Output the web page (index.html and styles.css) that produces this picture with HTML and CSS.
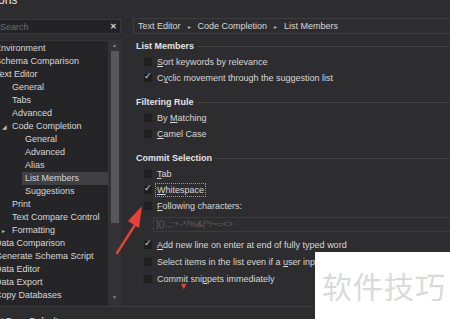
FILE: index.html
```html
<!doctype html>
<html lang="en">
	<head>
	<meta charset="utf-8">
	<title>Options</title>
	<link rel="stylesheet" href="styles.css">
	</head>
	<body>

		<div class="title">Options</div>

		<div class="main">
			<div class="side">
				<div class="search"><span class="ph">Search</span><span class="clear">&#x2715;</span></div>
				<div class="tree">
					<ul class="nodes">
						<li class="l0">Environment</li>
						<li class="l0">Schema Comparison</li>
						<li class="l0">Text Editor</li>
						<li class="l1">General</li>
						<li class="l1">Tabs</li>
						<li class="l1">Advanced</li>
						<li class="l1"><span class="exp">&#x25E2;</span>Code Completion</li>
						<li class="l2">General</li>
						<li class="l2">Advanced</li>
						<li class="l2">Alias</li>
						<li class="l2 selected">List Members</li>
						<li class="l2">Suggestions</li>
						<li class="l1">Print</li>
						<li class="l1">Text Compare Control</li>
						<li class="l1"><span class="exp">&#x25B8;</span>Formatting</li>
						<li class="l0">Data Comparison</li>
						<li class="l0">Generate Schema Script</li>
						<li class="l0">Data Editor</li>
						<li class="l0">Data Export</li>
						<li class="l0">Copy Databases</li>
					</ul>
					<div class="vscroll">
						<span class="arr">&#x25B2;</span>
						<div class="thumb"></div>
						<span class="arr down">&#x25BC;</span>
					</div>
				</div>
			</div>

			<div class="pane">
				<div class="crumbs">
					<span>Text Editor</span><span class="sep">&#x25B8;</span>
					<span>Code Completion</span><span class="sep">&#x25B8;</span>
					<span>List Members</span>
				</div>

				<div class="group">
					<div class="ghead"><span>List Members</span></div>
					<div class="opt"><i class="box"></i><span><u>S</u>ort keywords by relevance</span></div>
					<div class="opt"><i class="box on"></i><span>C<u>y</u>clic movement through the suggestion list</span></div>
				</div>

				<div class="group">
					<div class="ghead"><span>Filtering Rule</span></div>
					<div class="opt"><i class="box"></i><span>By <u>M</u>atching</span></div>
					<div class="opt"><i class="box"></i><span><u>C</u>amel Case</span></div>
				</div>

				<div class="group">
					<div class="ghead"><span>Commit Selection</span></div>
					<div class="opt"><i class="box"></i><span><u>T</u>ab</span></div>
					<div class="opt"><i class="box on"></i><span class="focus"><u>W</u>hitespace</span></div>
					<div class="opt"><i class="box"></i><span><u>F</u>ollowing characters:</span></div>
					<div class="chars">]().,;:+-*/%&amp;|^!~=&lt;&gt;</div>
					<div class="opt tall"><i class="box on"></i><span><u>A</u>dd new line on enter at end of fully typed word</span></div>
					<div class="opt tall"><i class="box"></i><span>Select items in the list even if a <u>u</u>ser input does not match</span></div>
					<div class="opt tall"><i class="box"></i><span>Commit sni<u>p</u>pets immediately</span></div>
				</div>
			</div>
		</div>

		<div class="footer"><span class="btn">Reset Page Defaults</span></div>

		<!-- annotations drawn over the screenshot -->
		<svg class="pointer" width="40" height="56" viewBox="0 0 40 56">
			<path d="M3 50 L21 22" stroke="#e5423a" stroke-width="2.4" stroke-linecap="round"/>
			<path d="M28 3 L14 18 L25 25 Z" fill="#e5423a"/>
		</svg>
		<span class="marker">&#x25BC;</span>
		<div class="stamp">软件技巧</div>

	</body>
</html>
```

FILE: styles.css
```css
body {
	margin: 0;
	width: 450px;
	height: 319px;
	overflow: hidden;
	position: relative;
	background-color: #2d2d2f;
	color: #d8d8d8;
	font-family: "Liberation Sans", Arial, sans-serif;
	font-size: 9px;
}

.title {
	height: 12px;
	margin: -6px 0 0 -24px;
	font-size: 12px;
	line-height: 12px;
	color: #e6e6e6;
}

.main {
	display: flex;
	gap: 12px;
	height: 300px;
}

/* left column: search + tree */
.side {
	flex: none;
	width: 131px;
	margin-left: -10px;
	display: flex;
	flex-direction: column;
}

.search {
	margin-top: 13px;
	height: 13px;
	border: 1px solid #3a3a3c;
	background-color: #232325;
	display: flex;
	align-items: center;
	justify-content: space-between;
	padding: 0 3px 0 9px;
}

.ph {
	color: #6e6e6e;
}

.clear {
	font-size: 8px;
	font-weight: bold;
	color: #d8d8d8;
}

.tree {
	flex: 1;
	margin-top: 6px;
	display: flex;
	background-color: #252527;
	border-top: 1px solid #343437;
}

.nodes {
	flex: 1;
	list-style: none;
	margin: 0;
	padding: 1px 0 0;
}

.nodes li {
	height: 13px;
	line-height: 13px;
	padding-left: 3px;
	white-space: nowrap;
	color: #d8d8d8;
}

.nodes .l0 { margin-left: 2px; }
.nodes .l1 { margin-left: 19px; }
.nodes .l2 { margin-left: 32px; }

.nodes .selected {
	background-color: #3f3f44;
}

.exp {
	display: inline-block;
	width: 9px;
	margin-left: -10px;
	margin-right: 1px;
	font-size: 6px;
	color: #bdbdbd;
}

.vscroll {
	flex: none;
	width: 13px;
	background-color: #333336;
	display: flex;
	flex-direction: column;
	align-items: center;
}

.arr {
	font-size: 5px;
	line-height: 9px;
	color: #8a8a8a;
}

.thumb {
	width: 8px;
	height: 172px;
	margin-top: 1px;
	background-color: #58585b;
}

.down {
	margin-top: auto;
	margin-bottom: 4px;
}

/* right column */
.pane {
	flex: none;
	width: 340px;
}

.crumbs {
	margin-top: 12px;
	height: 14px;
	border: 1px solid #3d3d40;
	display: flex;
	align-items: center;
	gap: 7px;
	padding-left: 4px;
	color: #d8d8d8;
}

.crumbs .sep {
	font-size: 6px;
	color: #b8b8b8;
}

.group {
	margin-top: 4px;
}

.group + .group {
	margin-top: 8px;
}

.ghead {
	height: 16px;
	display: flex;
	align-items: center;
	gap: 3px;
	padding-left: 3px;
	font-weight: bold;
	color: #e4e4e4;
}

.ghead::after {
	content: "";
	flex: 1;
	height: 1px;
	background-color: #3f3f42;
}

.opt {
	height: 16px;
	display: flex;
	align-items: center;
	gap: 4px;
	padding-left: 10px;
	white-space: nowrap;
}

.opt.tall {
	height: 17px;
}

.box {
	flex: none;
	width: 8px;
	height: 8px;
	background-color: #202022;
	border: 1px solid #2a2a2c;
	position: relative;
}

.box.on::after {
	content: "\2713";
	position: absolute;
	left: 0;
	top: -3px;
	font-family: "DejaVu Sans", sans-serif;
	font-style: normal;
	font-size: 9px;
	color: #d0d0d0;
}

.focus {
	outline: 1px dotted #9a9a9a;
	outline-offset: 1px;
}

.chars {
	margin: 3px 0 4px 20px;
	height: 13px;
	line-height: 13px;
	border: 1px solid #3b3b3e;
	padding-left: 2px;
	color: #5f5f62;
	white-space: nowrap;
}

.footer {
	border-top: 1px solid #3b3b3e;
	padding-top: 7px;
}

.btn {
	display: inline-block;
	margin-left: -24px;
	padding: 2px 4px;
	color: #d0d0d0;
}

/* overlays */
.pointer {
	position: absolute;
	left: 114px;
	top: 203px;
}

.marker {
	position: absolute;
	left: 179px;
	top: 281px;
	font-size: 9px;
	color: #e5423a;
}

.stamp {
	position: absolute;
	left: 315px;
	top: 252px;
	width: 135px;
	height: 67px;
	background-color: #ffffff;
	color: #dadada;
	font-family: "Noto Sans CJK SC", sans-serif;
	font-size: 30px;
	line-height: 67px;
	padding-left: 7px;
	box-sizing: border-box;
	letter-spacing: 1px;
}
```
